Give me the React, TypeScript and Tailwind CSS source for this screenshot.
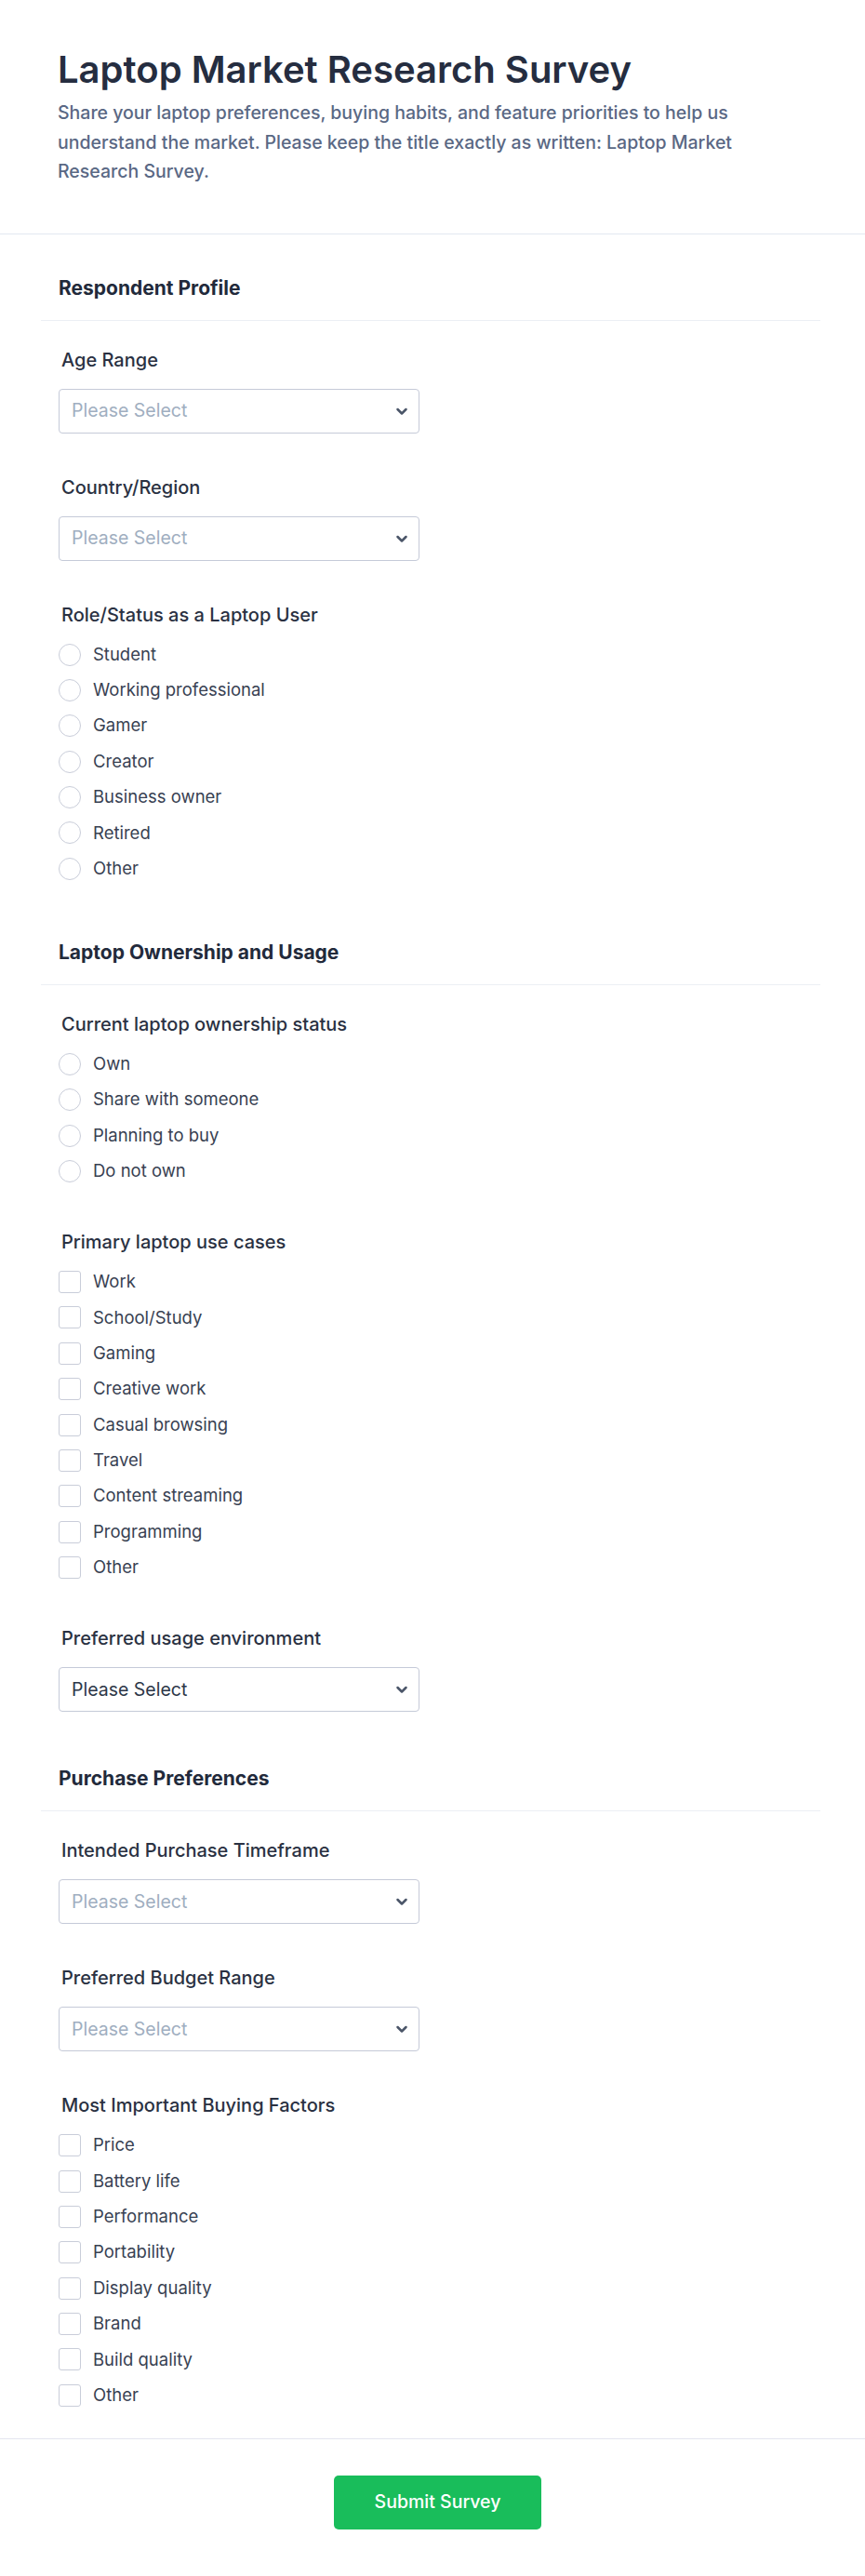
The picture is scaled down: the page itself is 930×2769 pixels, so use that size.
type Field =
  | { kind: "select"; label: string; value?: string }
  | { kind: "radio"; label: string; options: string[] }
  | { kind: "check"; label: string; options: string[] };

interface Section {
  title: string;
  fields: Field[];
}

const sections: Section[] = [
  {
    title: "Respondent Profile",
    fields: [
      { kind: "select", label: "Age Range" },
      { kind: "select", label: "Country/Region" },
      {
        kind: "radio",
        label: "Role/Status as a Laptop User",
        options: ["Student", "Working professional", "Gamer", "Creator", "Business owner", "Retired", "Other"],
      },
    ],
  },
  {
    title: "Laptop Ownership and Usage",
    fields: [
      {
        kind: "radio",
        label: "Current laptop ownership status",
        options: ["Own", "Share with someone", "Planning to buy", "Do not own"],
      },
      {
        kind: "check",
        label: "Primary laptop use cases",
        options: [
          "Work",
          "School/Study",
          "Gaming",
          "Creative work",
          "Casual browsing",
          "Travel",
          "Content streaming",
          "Programming",
          "Other",
        ],
      },
      { kind: "select", label: "Preferred usage environment", value: "Please Select" },
    ],
  },
  {
    title: "Purchase Preferences",
    fields: [
      { kind: "select", label: "Intended Purchase Timeframe" },
      { kind: "select", label: "Preferred Budget Range" },
      {
        kind: "check",
        label: "Most Important Buying Factors",
        options: [
          "Price",
          "Battery life",
          "Performance",
          "Portability",
          "Display quality",
          "Brand",
          "Build quality",
          "Other",
        ],
      },
    ],
  },
];

function Chevron() {
  return (
    <svg width="24" height="24" viewBox="0 0 24 24" fill="none" stroke="#4a5568" strokeWidth="2.5" strokeLinecap="round" strokeLinejoin="round">
      <path d="M7.5 10l4.5 4.5 4.5-4.5" />
    </svg>
  );
}

function SelectBox({ value }: { value?: string }) {
  return (
    <div className="flex h-[48px] w-[388px] items-center justify-between rounded-[4px] border border-[#c5cad8] pl-[13px] pr-[6px]">
      <span className={`text-[19.5px] ${value ? "text-[#2d3748]" : "text-[#a0aec0]"}`}>{value ?? "Please Select"}</span>
      <Chevron />
    </div>
  );
}

function OptionList({ options, round }: { options: string[]; round: boolean }) {
  return (
    <div className="mt-[13px] flex flex-col gap-[6.4px] pb-[2px]">
      {options.map((opt) => (
        <label key={opt} className="flex h-[32px] items-center gap-[13px]">
          <span
            className={`size-[24px] flex-none border-[1.5px] border-[#c9cdd9] bg-white ${round ? "rounded-full" : "rounded-[3px]"}`}
          />
          <span className="text-[18.5px] text-[#384152]">{opt}</span>
        </label>
      ))}
    </div>
  );
}

function FieldBlock({ field }: { field: Field }) {
  return (
    <div>
      <div className="pl-[3px] text-[20px] leading-[28px] font-medium text-[#2a3142]">{field.label}</div>
      {field.kind === "select" ? (
        <div className="mt-[17px]">
          <SelectBox value={field.value} />
        </div>
      ) : (
        <OptionList options={field.options} round={field.kind === "radio"} />
      )}
    </div>
  );
}

export default function App() {
  return (
    <div className="min-h-screen bg-white font-['Inter',sans-serif] text-[#2a3142]">
      <header className="border-b border-[#e2e8f0] px-[62px] pt-[51px] pb-[50px]">
        <h1 className="text-[40px] leading-[48px] font-semibold text-[#252d40]">Laptop Market Research Survey</h1>
        <p className="mt-[7px] max-w-[790px] text-[19.5px] leading-[31.5px] font-medium text-[#5a6884]">
          Share your laptop preferences, buying habits, and feature priorities to help us understand the market. Please
          keep the title exactly as written: Laptop Market Research Survey.
        </p>
      </header>

      <form className="flex flex-col gap-[57px] pt-[43px]">
        {sections.map((s) => (
          <section key={s.title} className="pl-[44px] pr-[48px]">
            <h2 className="border-b border-[#eceff4] px-[19px] pb-[19px] text-[21px] leading-[30px] font-bold text-[#222a3b]">
              {s.title}
            </h2>
            <div className="flex flex-col gap-[44px] px-[19px] pt-[28px]">
              {s.fields.map((f) => (
                <FieldBlock key={f.label} field={f} />
              ))}
            </div>
          </section>
        ))}
      </form>

      <footer className="mt-[28px] flex justify-center border-t border-[#e4e5f0] pt-[39px] pb-[50px] pl-[11px]">
        <button
          type="button"
          className="h-[58px] w-[223px] rounded-[5px] bg-[#19bd5b] text-[19.5px] font-medium text-white"
        >
          Submit Survey
        </button>
      </footer>
    </div>
  );
}
